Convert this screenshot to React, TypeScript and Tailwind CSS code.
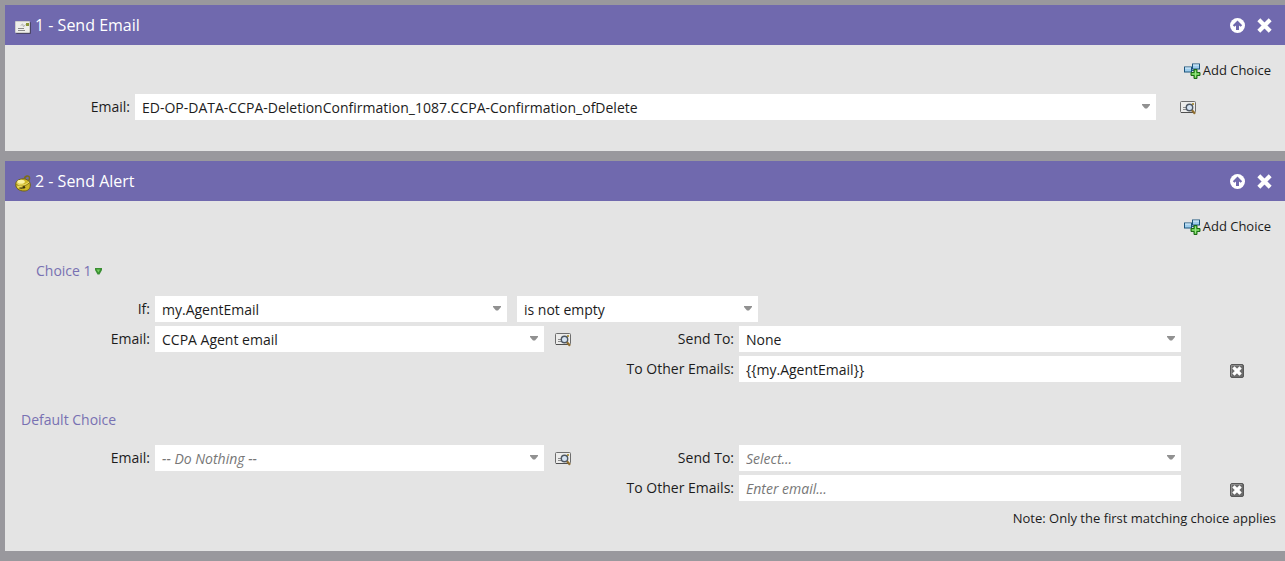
import type { ReactNode } from "react";

interface FieldProps {
  id: string;
  className?: string;
}

interface SelectFieldProps extends FieldProps {
  options: string[];
  placeholder?: boolean;
}

interface StepCardProps {
  title: string;
  icon: ReactNode;
  children: ReactNode;
}

const MailIcon = () => (
  <svg width="16" height="13" viewBox="0 0 16 13" aria-hidden="true">
    <rect x="1" y="1" width="15" height="12" rx="1" fill="#4b4666" />
    <rect x="0" y="0" width="15" height="12" rx="1" fill="#cfcfcb" />
    <rect x="1" y="1" width="13" height="10" fill="#efefeb" />
    <rect x="11" y="2" width="3" height="3" fill="#8b9638" />
    <path d="M6 4.500c1-2 2.500-1.500 2 0s1.500 1 2.500-1" fill="none" stroke="#aaa" />
    <path d="M3 7.500h6M3 9.500h7" stroke="#8a8a8a" />
  </svg>
);

const BellIcon = () => (
  <svg width="16" height="17" viewBox="0 0 16 17" aria-hidden="true">
    <path d="M9.500 4.500c0-4 5-4.500 5-1.500 0 1.500-.5 2-1 3" fill="none" stroke="#7b6c1c" strokeWidth="1.600" />
    <path
      d="M0.700 9.500C0.700 6 4 4 8 3.800c4 0 7.300 2.400 7.300 6.200 0 4-2.500 6-6.300 6-4.800 0-8.300-2.500-8.300-6.500z"
      fill="#cfb728"
      stroke="#6f6218"
    />
    <ellipse cx="6" cy="6.800" rx="3.800" ry="2" fill="#fbf3a1" />
    <path d="M1.200 9c3 3 9.500 2.500 13-1" fill="none" stroke="#8a7816" />
    <path d="M1.500 8c3 3 9 2.500 12.500-1" fill="none" stroke="#f2e475" strokeWidth="0.900" />
    <ellipse cx="4.500" cy="11.800" rx="2.500" ry="1.200" fill="#e9d958" />
    <path d="M4.500 12.800c1.500.6 3 .4 5-.6" fill="none" stroke="#3c3410" strokeWidth="1.200" />
    <circle cx="9" cy="12.300" r="1.200" fill="#3c3410" />
  </svg>
);

const MoveUpIcon = () => (
  <svg width="15" height="15" viewBox="0 0 15 15" aria-hidden="true">
    <circle cx="7.500" cy="7.500" r="7.500" fill="#fff" />
    <path d="M7.500 2.500 2.800 7.200l1.600 1.600L6 7.400V12h3V7.400l1.600 1.400 1.600-1.600z" fill="#7069ae" />
  </svg>
);

const CloseIcon = () => (
  <svg width="15" height="15" viewBox="0 0 15 15" aria-hidden="true">
    <path
      d="M3.300 3.300l8.400 8.400M11.700 3.300l-8.400 8.400"
      stroke="#fff"
      strokeWidth="4.200"
      strokeLinecap="square"
    />
  </svg>
);

const AddChoiceIcon = () => (
  <svg width="17" height="16" viewBox="0 0 17 16" aria-hidden="true">
    <path d="M8 7.500h2V3" fill="none" stroke="#1d5f8c" />
    <rect x="8.500" y="1" width="7" height="5" fill="#9fcdec" stroke="#1b547c" />
    <rect x="0.500" y="4" width="7" height="5" fill="#9fcdec" stroke="#1b547c" />
    <path d="M1 5h6M9 2h6" stroke="#e0f1fb" />
    <path d="M10 6.500h3v3h3v3h-3v3h-3v-3H7v-3h3z" fill="#4fb83a" stroke="#1e6b17" />
    <path d="M11.500 7.500v7M8 11h7" stroke="#9be886" />
  </svg>
);

const PreviewIcon = () => (
  <svg width="16" height="14" viewBox="0 0 16 14" aria-hidden="true">
    <rect x="0.500" y="0.500" width="15" height="11" rx="1" fill="#ececeb" stroke="#6d6d6d" />
    <path d="M1 11.500h14" stroke="#4f4f4f" />
    <rect x="12" y="2" width="2" height="2" fill="#b39b4c" />
    <path d="M3 6.500h3M3 8.500h4" stroke="#8b8b8b" />
    <circle cx="9.500" cy="6.500" r="3.200" fill="#d5e3f2" stroke="#4d5763" strokeWidth="1.400" />
    <path d="M12 9.200l3 3.600" stroke="#8f6d2e" strokeWidth="2.200" />
  </svg>
);

const RemoveIcon = () => (
  <svg width="14" height="14" viewBox="0 0 14 14" aria-hidden="true">
    <rect x="0.500" y="0.500" width="13" height="13" rx="1.500" fill="#6c6c6c" stroke="#585858" />
    <path d="M1.500 12V1.500H12" fill="none" stroke="#8e8e8e" />
    <path d="M4.500 4.500l5 5M9.500 4.500l-5 5" stroke="#fff" strokeWidth="3.200" strokeLinecap="square" />
  </svg>
);

const MenuArrowIcon = () => (
  <svg width="7" height="7" viewBox="0 0 7 7" aria-hidden="true">
    <path d="M0 0h7v2L4.500 6.500h-2L0 2z" fill="#3a8f33" />
    <path d="M1.500 1.500h3.500L3.500 4.500z" fill="#74cf5c" />
  </svg>
);

const SelectField = ({ id, options, placeholder, className = "" }: SelectFieldProps) => (
  <div className={`relative ${className}`}>
    <select
      id={id}
      aria-label={id}
      className={`block h-[26px] w-full appearance-none rounded-none bg-white pt-px pr-6 pl-[7px] text-sm outline-none ${
        placeholder ? "text-[#777] italic" : "text-[#1c1c1c]"
      }`}
    >
      {options.map((option) => (
        <option key={option}>{option}</option>
      ))}
    </select>
    <svg
      className="pointer-events-none absolute top-[10px] right-[6px]"
      width="8"
      height="5"
      viewBox="0 0 8 5"
      aria-hidden="true"
    >
      <path d="M0 0h8v1L5 4.500H3L0 1z" fill="#919191" />
    </svg>
  </div>
);

const Label = ({ id, children }: { id: string; children: ReactNode }) => (
  <label htmlFor={id} className="pr-[5px] text-right text-sm leading-[26px]">
    {children}
  </label>
);

const PreviewButton = () => (
  <button type="button" aria-label="Preview email" className="shrink-0 pt-0.5">
    <PreviewIcon />
  </button>
);

const StepCard = ({ title, icon, children }: StepCardProps) => (
  <section className="bg-[#e4e4e4]">
    <header className="flex h-10 items-center bg-[#7069ae] pr-[13px] pl-[10px] text-white">
      <span className="mt-1 w-5 shrink-0">{icon}</span>
      <h2 className="flex-1 text-base">{title}</h2>
      <button type="button" aria-label="Move up" className="mr-3">
        <MoveUpIcon />
      </button>
      <button type="button" aria-label="Remove step">
        <CloseIcon />
      </button>
    </header>
    <div className="pt-4">
      <div className="flex justify-end pr-[14px]">
        <button type="button" className="flex h-5 items-center gap-0.5 text-[13px]">
          <AddChoiceIcon />
          Add Choice
        </button>
      </div>
      {children}
    </div>
  </section>
);

interface ChoiceFieldsProps {
  prefix: string;
  email: string;
  sendTo: string;
  others?: string;
  empty?: boolean;
}

const ChoiceFields = ({ prefix, email, sendTo, others, empty }: ChoiceFieldsProps) => (
  <div className="grid grid-cols-[150px_minmax(0,389fr)_195px_minmax(0,442fr)_104px] gap-y-1">
    <Label id={`${prefix}-email`}>Email:</Label>
    <SelectField id={`${prefix}-email`} options={[email]} placeholder={empty} />
    <div className="flex items-center justify-between pl-[11px]">
      <PreviewButton />
      <Label id={`${prefix}-send-to`}>Send To:</Label>
    </div>
    <SelectField id={`${prefix}-send-to`} options={[sendTo]} placeholder={empty} />

    <div className="col-start-3 flex justify-end">
      <Label id={`${prefix}-others`}>To Other Emails:</Label>
    </div>
    <input
      id={`${prefix}-others`}
      type="text"
      defaultValue={others}
      placeholder="Enter email..."
      className="h-[26px] w-full bg-white px-[7px] pt-px text-sm text-[#1c1c1c] outline-none placeholder:text-[#777] placeholder:italic"
    />
    <div className="flex items-center pt-1 pl-[49px]">
      <button type="button" aria-label="Remove choice">
        <RemoveIcon />
      </button>
    </div>
  </div>
);

const App = () => (
  <main className="flex min-h-screen flex-col gap-[10px] bg-[#99989d] py-[5px] pl-[5px] font-['Open_Sans',sans-serif] text-[#1c1c1c]">
    <StepCard title="1 - Send Email" icon={<MailIcon />}>
      <div className="mt-[13px] flex items-center pr-[89px] pb-[31px]">
        <div className="flex w-[130px] shrink-0 justify-end">
          <Label id="send-email">Email:</Label>
        </div>
        <SelectField
          id="send-email"
          className="mr-6 flex-1"
          options={["ED-OP-DATA-CCPA-DeletionConfirmation_1087.CCPA-Confirmation_ofDelete"]}
        />
        <PreviewButton />
      </div>
    </StepCard>

    <StepCard title="2 - Send Alert" icon={<BellIcon />}>
      <div className="mt-6 flex h-5 items-center gap-[3px] pl-[31px] text-sm text-[#7871b2]">
        <h3>Choice 1</h3>
        <button type="button" aria-label="Choice 1 menu">
          <MenuArrowIcon />
        </button>
      </div>
      <div className="mt-[15px] mb-1 flex">
        <div className="flex w-[150px] shrink-0 justify-end">
          <Label id="if-attribute">If:</Label>
        </div>
        <SelectField id="if-attribute" className="mr-[10px] w-[352px]" options={["my.AgentEmail"]} />
        <SelectField id="if-operator" className="w-[241px]" options={["is not empty"]} />
      </div>
      <ChoiceFields prefix="choice" email="CCPA Agent email" sendTo="None" others="{{my.AgentEmail}}" />

      <h3 className="mt-7 mb-[15px] pl-4 text-sm text-[#7871b2]">Default Choice</h3>
      <ChoiceFields prefix="default" email="-- Do Nothing --" sendTo="Select..." empty />
      <p className="mt-[7px] pr-[9px] pb-[23px] text-right text-[13px] leading-5">
        Note: Only the first matching choice applies
      </p>
    </StepCard>
  </main>
);

export default App;
